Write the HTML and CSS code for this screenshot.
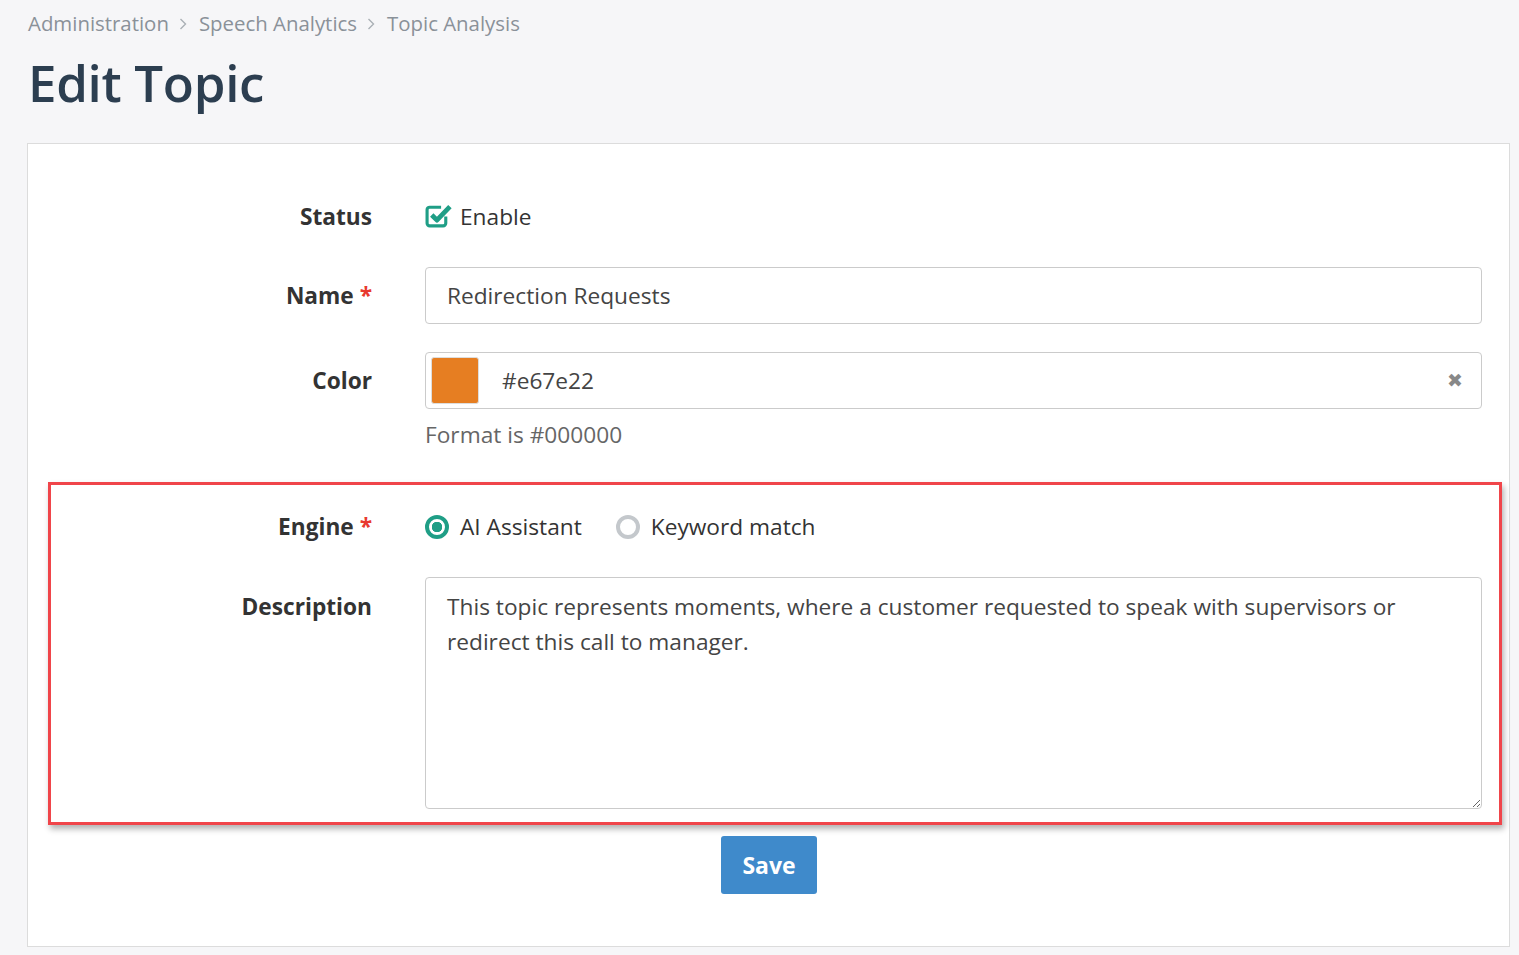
FILE: index.html
```html
<!DOCTYPE html>
<html lang="en">
<head>
    <meta charset="UTF-8">
    <title>Edit Topic</title>
    <link rel="stylesheet" href="styles.css">
</head>
<body>
    <div class="page">
        <nav class="breadcrumb">
            <span>Administration</span>
            <svg class="sep" width="8" height="12" viewBox="0 0 8 12"><path d="M1.5 1l5 5-5 5" fill="none" stroke="#aab0b6" stroke-width="1.4"/></svg>
            <span>Speech Analytics</span>
            <svg class="sep" width="8" height="12" viewBox="0 0 8 12"><path d="M1.5 1l5 5-5 5" fill="none" stroke="#aab0b6" stroke-width="1.4"/></svg>
            <span>Topic Analysis</span>
        </nav>
        <h1 class="page-title">Edit Topic</h1>

        <div class="panel">
            <div class="form-row row-status">
                <label class="form-label">Status</label>
                <div class="form-field">
                    <span class="checkbox">
                        <svg width="27" height="27" viewBox="0 0 26 26">
                            <path d="M20 14v6.5a2.5 2.5 0 0 1-2.5 2.5h-13A2.5 2.5 0 0 1 2 20.5v-13A2.5 2.5 0 0 1 4.5 5h11" fill="none" stroke="#1f9e86" stroke-width="3"/>
                            <path d="M6.5 12.5l5 5L24 4.5" fill="none" stroke="#1f9e86" stroke-width="4.6" stroke-linejoin="round"/>
                        </svg>
                        Enable
                    </span>
                </div>
            </div>

            <div class="form-row row-name">
                <label class="form-label">Name <span class="req">*</span></label>
                <div class="form-field">
                    <div class="input">Redirection Requests</div>
                </div>
            </div>

            <div class="form-row row-color">
                <label class="form-label">Color</label>
                <div class="form-field">
                    <div class="input color-input">
                        <span class="swatch"></span>
                        <span class="color-value">#e67e22</span>
                        <span class="clear">&#10006;</span>
                    </div>
                    <div class="help">Format is #000000</div>
                </div>
            </div>

            <div class="highlight">
                <div class="form-row row-engine">
                    <label class="form-label">Engine <span class="req">*</span></label>
                    <div class="form-field radios">
                        <span class="radio checked"><span class="dot"></span>AI Assistant</span>
                        <span class="radio"><span class="dot"></span>Keyword match</span>
                    </div>
                </div>

                <div class="form-row row-desc">
                    <label class="form-label">Description</label>
                    <div class="form-field">
                        <textarea class="textarea">This topic represents moments, where a customer requested to speak with supervisors or redirect this call to manager.</textarea>
                    </div>
                </div>
            </div>

            <div class="actions">
                <button class="btn-save">Save</button>
            </div>
        </div>
    </div>
</body>
</html>
```

FILE: styles.css
```css
* {
    margin: 0;
    padding: 0;
    box-sizing: border-box;
}

body {
    font-family: 'Open Sans', 'Noto Sans', sans-serif;
    background: #f6f6f8;
    color: #333;
}

.page {
    padding: 8px 9px 8px 27px;
}

.breadcrumb {
    display: flex;
    align-items: center;
    font-size: 20.4px;
    line-height: 30px;
    color: #8a9199;
    padding-left: 1px;
}

.breadcrumb .sep {
    margin: 2px 12px 0 10px;
}

.page-title {
    font-size: 51px;
    font-weight: 600;
    color: #2c3e50;
    line-height: 64px;
    margin: 12px 0 29px 1px;
    letter-spacing: -0.3px;
}

.panel {
    background: #fff;
    border: 1px solid #dcdcdc;
    padding: 40px 7px 52px 20px;
}

.form-row {
    display: grid;
    grid-template-columns: 321px 1fr;
    column-gap: 53px;
    padding: 0 20px 0 3px;
}

.form-label {
    text-align: right;
    font-weight: 700;
    font-size: 22.7px;
    color: #333;
    line-height: 57px;
}

.req {
    color: #e8392f;
}

.form-field {
    min-width: 0;
}

.row-status .form-label,
.row-status .form-field {
    line-height: 66px;
}

.checkbox {
    display: inline-flex;
    align-items: center;
    gap: 8px;
    font-size: 22.7px;
    color: #333;
}

.checkbox svg {
    margin-top: -3px;
}

.row-name {
    margin-top: 11px;
}

.row-color {
    margin-top: 28px;
}

.input {
    height: 57px;
    border: 1px solid #cbcbcb;
    border-radius: 4px;
    font-size: 22.7px;
    color: #444;
    padding: 0 21px;
    line-height: 55px;
}

.color-input {
    display: flex;
    align-items: center;
    padding: 0 18px 0 5px;
}

.swatch {
    width: 48px;
    height: 47px;
    background: #e67e22;
    border-radius: 3px;
    border: 1px solid #ddd;
    flex: none;
}

.color-value {
    margin-left: 23px;
    flex: 1;
}

.clear {
    color: #888;
    font-size: 19px;
}

.help {
    font-size: 22.7px;
    color: #666;
    line-height: 30px;
    margin-top: 11px;
}

.highlight {
    margin-top: 32px;
    border: 3px solid #f0454a;
    box-shadow: 2px 4px 6px rgba(0, 0, 0, 0.3);
    padding: 12px 0 13px;
}

.highlight .form-row {
    padding: 0 17px 0 0;
}

.row-engine .form-label,
.row-engine .form-field {
    line-height: 60px;
}

.radios {
    display: flex;
    align-items: center;
    gap: 34px;
}

.radio {
    display: inline-flex;
    align-items: center;
    gap: 11px;
    font-size: 22.7px;
    color: #333;
}

.radio .dot {
    width: 24px;
    height: 24px;
    border-radius: 50%;
    border: 4px solid #c4c8cc;
    background: #fff;
}

.radio.checked .dot {
    border-color: #1f9e86;
    background: radial-gradient(circle, #1f9e86 0 5px, #fff 5.5px);
}

.row-desc {
    margin-top: 20px;
}

.row-desc .form-label {
    line-height: 60px;
}

.textarea {
    display: block;
    width: 100%;
    height: 232px;
    border: 1px solid #cbcbcb;
    border-radius: 4px;
    font-family: 'Open Sans', 'Noto Sans', sans-serif;
    font-size: 22.7px;
    line-height: 35px;
    color: #444;
    padding: 11px 21px;
    resize: vertical;
    outline: none;
}

.actions {
    display: flex;
    justify-content: center;
    padding-top: 11px;
}

.btn-save {
    width: 96px;
    height: 58px;
    background: #3f8acb;
    border: none;
    border-radius: 3px;
    color: #fff;
    font-family: 'Open Sans', 'Noto Sans', sans-serif;
    font-size: 23px;
    font-weight: 700;
    margin-right: 12px;
}
```
